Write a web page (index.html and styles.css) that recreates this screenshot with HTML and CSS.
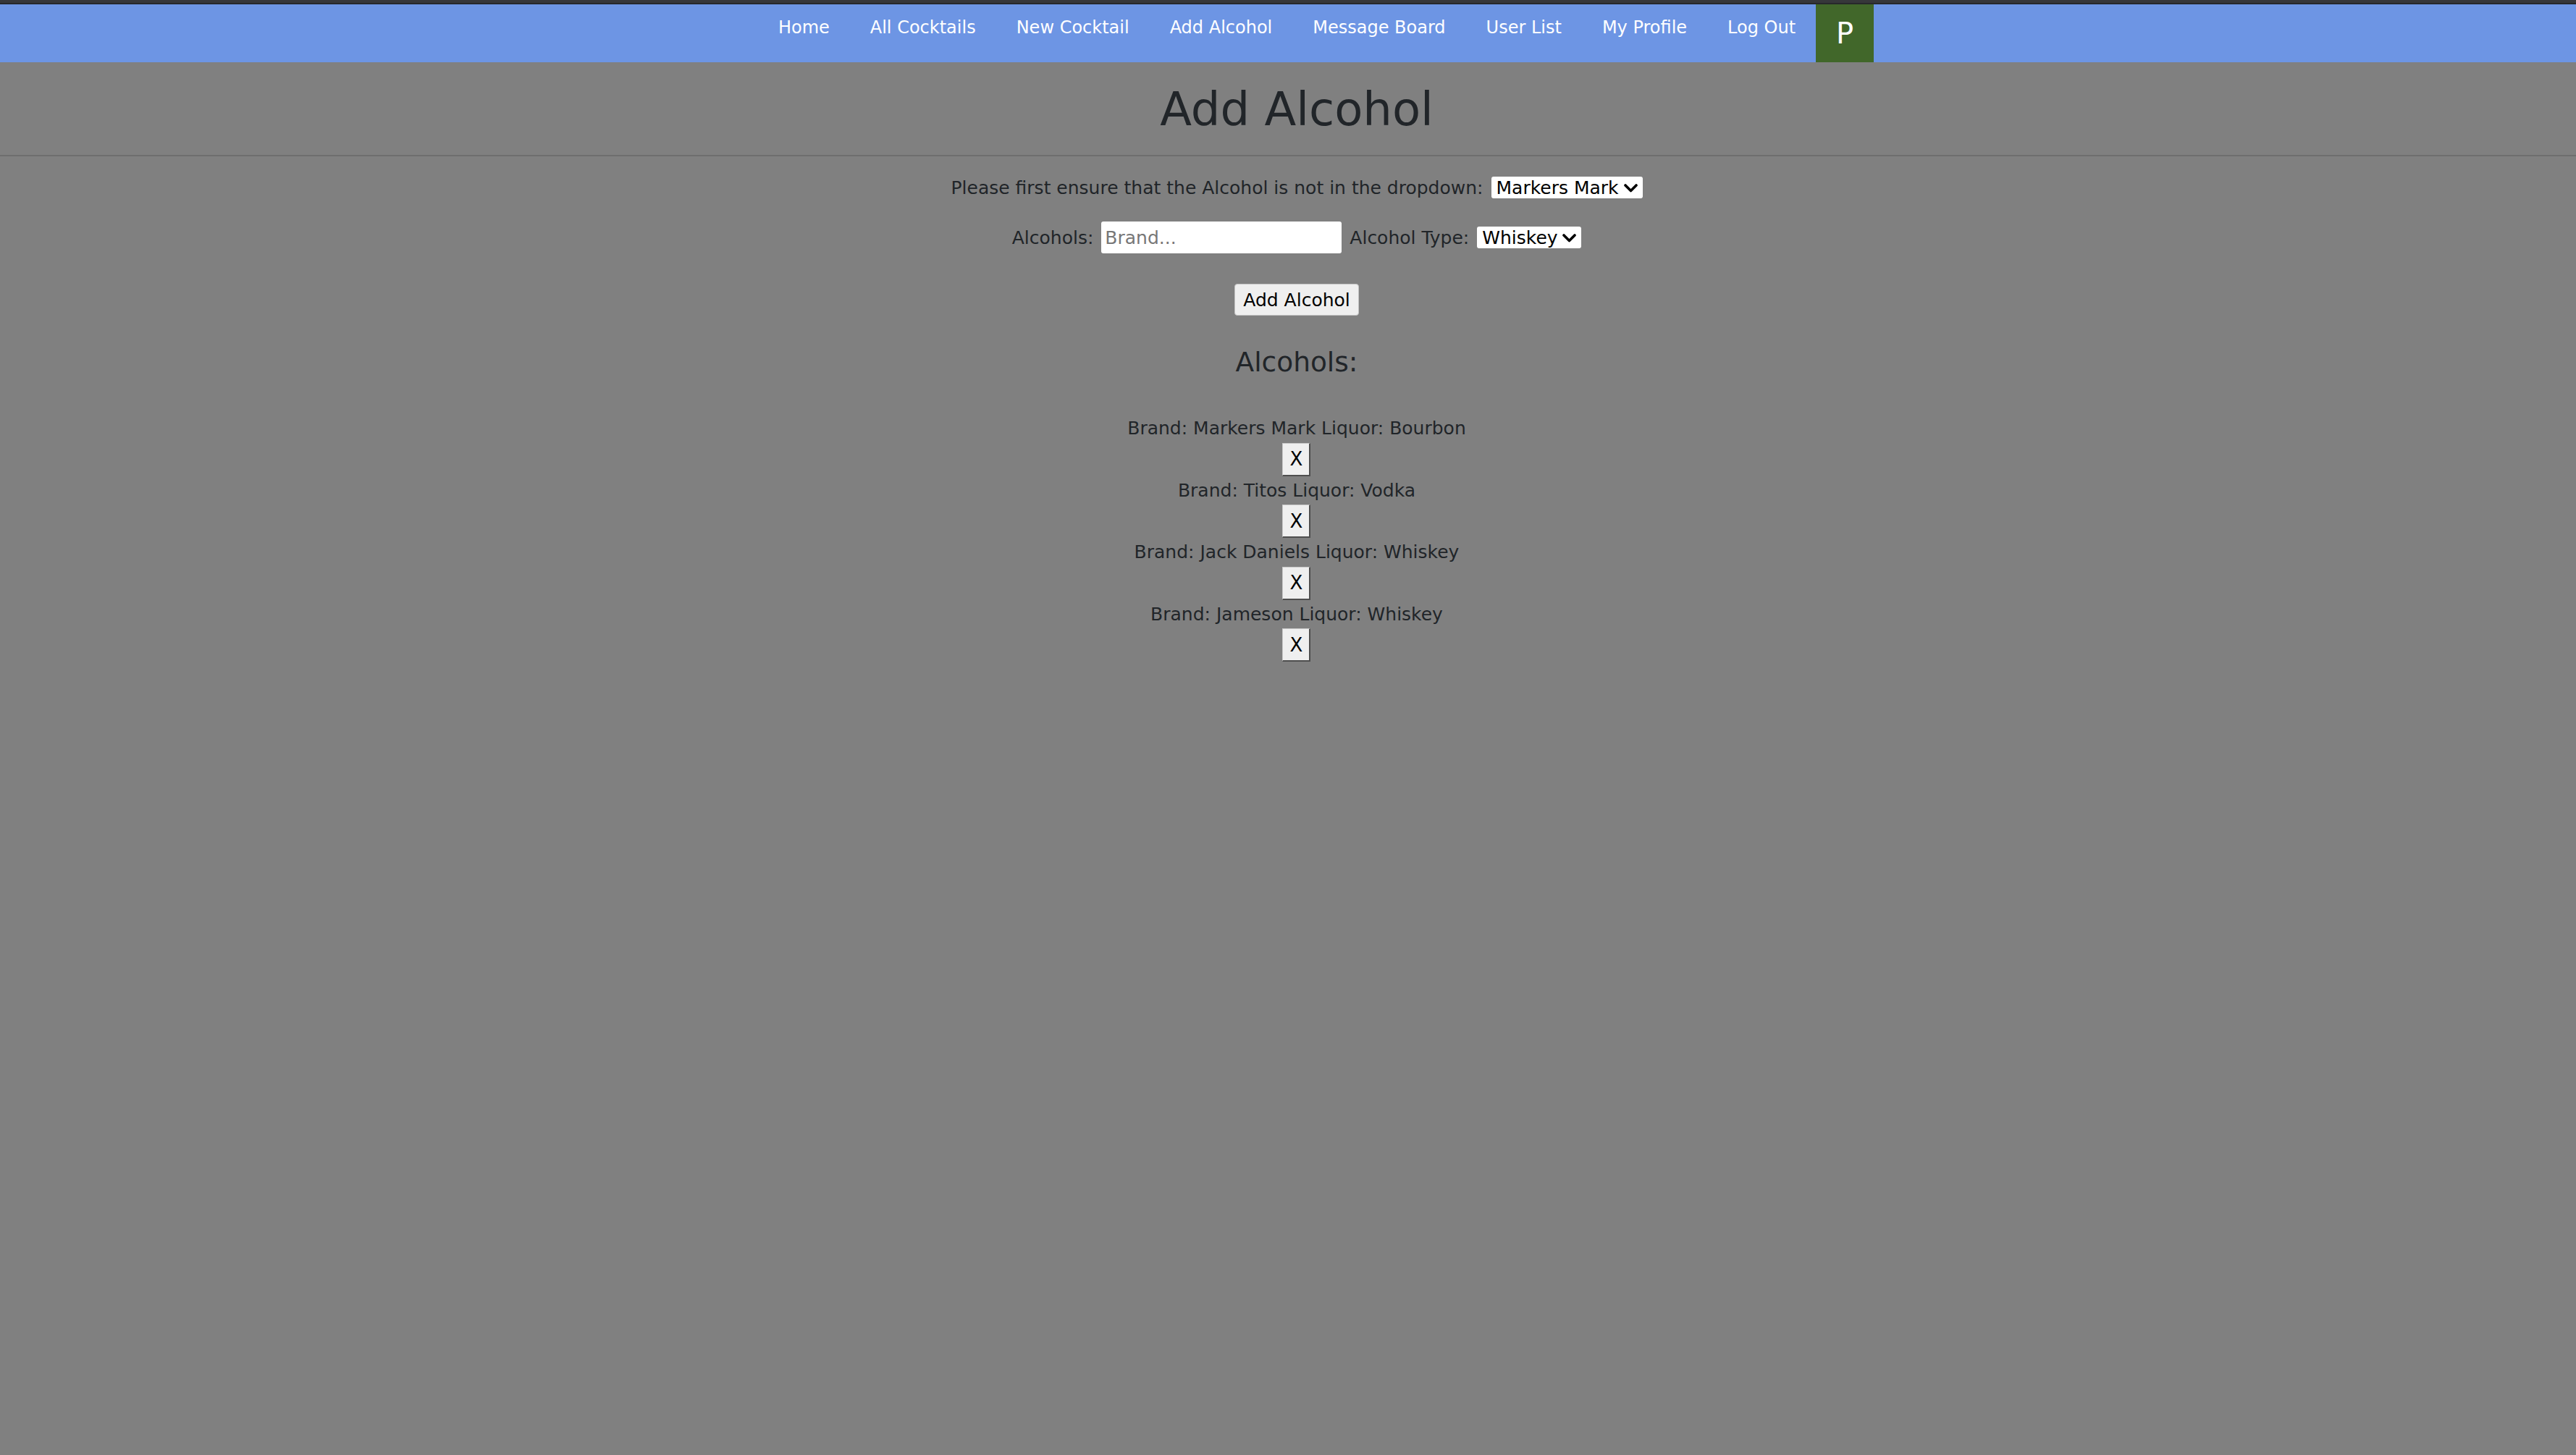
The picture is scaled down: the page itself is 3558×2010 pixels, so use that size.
FILE: index.html
```html
<!DOCTYPE html>
<html lang="en">
<head>
<meta charset="utf-8">
<title>Add Alcohol</title>
<link rel="stylesheet" href="styles.css">
</head>
<body>
<div class="topbar"></div>
<nav class="nav">
  <a class="nav-link" href="#">Home</a>
  <a class="nav-link" href="#">All Cocktails</a>
  <a class="nav-link" href="#">New Cocktail</a>
  <a class="nav-link" href="#">Add Alcohol</a>
  <a class="nav-link" href="#">Message Board</a>
  <a class="nav-link" href="#">User List</a>
  <a class="nav-link" href="#">My Profile</a>
  <a class="nav-link" href="#">Log Out</a>
  <div class="avatar">P</div>
</nav>
<header class="title-wrap">
  <h1 class="title">Add Alcohol</h1>
</header>
<hr class="rule">
<main class="main">
  <div class="row row-check">
    <span>Please first ensure that the Alcohol is not in the dropdown:</span>
    <span class="select-wrap">
      <select class="select"><option>Markers Mark</option></select>
      <svg class="chev" width="19" height="12" viewBox="0 0 19 12"><polyline points="2,2 9.5,9.5 17,2" fill="none" stroke="#000" stroke-width="3.6" stroke-linecap="round" stroke-linejoin="round"/></svg>
    </span>
  </div>
  <div class="row row-add">
    <span>Alcohols:</span>
    <input class="input" type="text" placeholder="Brand...">
    <span>Alcohol Type:</span>
    <span class="select-wrap">
      <select class="select"><option>Whiskey</option></select>
      <svg class="chev" width="19" height="12" viewBox="0 0 19 12"><polyline points="2,2 9.5,9.5 17,2" fill="none" stroke="#000" stroke-width="3.6" stroke-linecap="round" stroke-linejoin="round"/></svg>
    </span>
  </div>
  <div class="row row-btn">
    <button class="btn" type="button">Add Alcohol</button>
  </div>
  <h3 class="subtitle">Alcohols:</h3>
  <div class="list">
    <div class="item">
      <div class="item-text">Brand: Markers Mark Liquor: Bourbon</div>
      <button class="xbtn" type="button">X</button>
    </div>
    <div class="item">
      <div class="item-text">Brand: Titos Liquor: Vodka</div>
      <button class="xbtn" type="button">X</button>
    </div>
    <div class="item">
      <div class="item-text">Brand: Jack Daniels Liquor: Whiskey</div>
      <button class="xbtn" type="button">X</button>
    </div>
    <div class="item">
      <div class="item-text">Brand: Jameson Liquor: Whiskey</div>
      <button class="xbtn" type="button">X</button>
    </div>
  </div>
</main>
</body>
</html>
```
FILE: styles.css
```css
html, body {
  margin: 0;
  padding: 0;
}
body {
  background: #808080;
  color: #212529;
  font-family: "DejaVu Sans", "Liberation Sans", sans-serif;
  font-size: 25px;
  min-height: 2010px;
}
.topbar {
  height: 4px;
  background: #36373a;
  border-bottom: 2px solid #27282b;
}
.nav {
  height: 80px;
  background: #6d95e4;
  display: flex;
  justify-content: center;
  align-items: flex-start;
  padding-left: 77px;
}
.nav-link {
  color: #ffffff;
  text-decoration: none;
  font-size: 24px;
  line-height: 36px;
  padding: 14px 28px 0;
}
.avatar {
  width: 80px;
  height: 80px;
  background: #41672a;
  color: #ffffff;
  font-size: 40px;
  display: flex;
  align-items: center;
  justify-content: center;
}
.title-wrap {
  padding-left: 24px;
  text-align: center;
}
.title {
  margin: 27px 0 0;
  font-size: 64px;
  font-weight: normal;
  line-height: 77px;
  height: 77px;
  padding-bottom: 24px;
}
.rule {
  margin: 0;
  border: 0;
  border-top: 2px solid #6e6e6e;
  height: 0;
}
.main {
  padding-left: 24px;
  display: flex;
  flex-direction: column;
  align-items: center;
}
.row {
  display: flex;
  justify-content: center;
  align-items: center;
  gap: 11px;
}
.row-check {
  margin-top: 28px;
  height: 30px;
}
.row-add {
  margin-top: 32px;
  height: 44px;
}
.row-btn {
  margin-top: 42px;
  height: 44px;
}
.select-wrap {
  position: relative;
  display: inline-block;
  height: 30px;
}
.select {
  -webkit-appearance: none;
  appearance: none;
  height: 30px;
  border: 0;
  border-radius: 3px;
  background: #ffffff;
  color: #000000;
  font-family: inherit;
  font-size: 25px;
  padding: 0 32px 0 7px;
  margin: 0;
}
.chev {
  position: absolute;
  right: 7px;
  top: 10px;
  pointer-events: none;
}
.input {
  width: 332px;
  height: 44px;
  box-sizing: border-box;
  border: 0;
  border-radius: 3px;
  background: #ffffff;
  font-family: inherit;
  font-size: 25px;
  padding: 0 5px;
  margin: 0;
  color: #000;
}
.input::placeholder {
  color: #777777;
}
.btn {
  width: 172px;
  height: 44px;
  background: #efefef;
  border: 1px solid #c4c4c4;
  border-radius: 4px;
  color: #000000;
  font-family: inherit;
  font-size: 25px;
  padding: 0;
  margin: 0;
}
.subtitle {
  margin: 42px 0 0;
  font-size: 37.5px;
  font-weight: normal;
  line-height: 45px;
}
.list {
  margin-top: 49px;
  display: flex;
  flex-direction: column;
  align-items: center;
}
.item {
  display: flex;
  flex-direction: column;
  align-items: center;
}
.item-text {
  line-height: 39px;
  height: 39.5px;
}
.xbtn {
  width: 39px;
  height: 46px;
  box-sizing: border-box;
  background: #efefef;
  border-style: solid;
  border-width: 1px 2px 2px 1px;
  border-color: #c8c8c8 #4e4e4e #4e4e4e #c8c8c8;
  border-radius: 0;
  color: #000000;
  font-family: inherit;
  font-size: 26px;
  padding: 0;
  margin: 0;
}
```
